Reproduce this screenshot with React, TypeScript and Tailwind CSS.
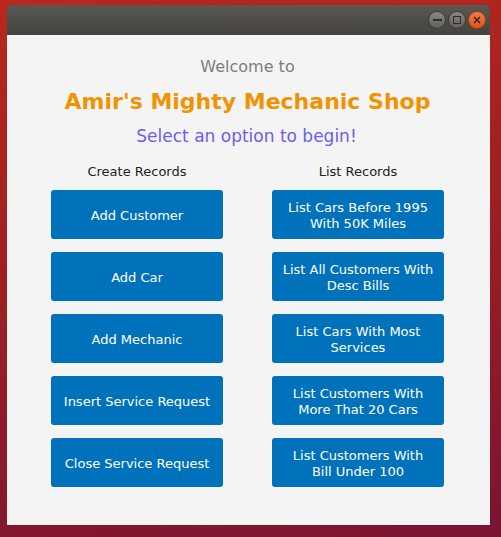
import React from "react";

const left = ["Add Customer", "Add Car", "Add Mechanic", "Insert Service Request", "Close Service Request"];
const right = [
  ["List Cars Before 1995", "With 50K Miles"],
  ["List All Customers With", "Desc Bills"],
  ["List Cars With Most", "Services"],
  ["List Customers With", "More That 20 Cars"],
  ["List Customers With", "Bill Under 100"],
];

function Btn({ lines }: { lines: string[] }) {
  return (
    <div className="h-[49px] w-[172px] rounded-[3px] bg-[#0072bc] flex flex-col items-center justify-center pt-[2px] text-white text-[13px] leading-[16px]">
      {lines.map((l, i) => (
        <span key={i}>{l}</span>
      ))}
    </div>
  );
}

export default function App() {
  return (
    <div
      className="w-[501px] h-[537px] overflow-hidden bg-[linear-gradient(170deg,#b8281c_0%,#9a1f24_50%,#7a1432_100%)] pt-[5px] pl-[7px]"
      style={{ fontFamily: '"DejaVu Sans", sans-serif' }}
    >
      <div className="w-[483px] flex flex-col">
        <div className="h-[30px] rounded-t-[5px] bg-[linear-gradient(#5a5852,#43423d)] flex items-center justify-end pr-[4px] gap-[2px]">
          <div className="w-[18px] h-[18px] rounded-full bg-[linear-gradient(#8a8984,#5f5e5a)] border border-[#3a3935] flex items-center justify-center">
            <div className="w-[9px] h-[1.5px] bg-[#2e2d2a]" />
          </div>
          <div className="w-[18px] h-[18px] rounded-full bg-[linear-gradient(#8a8984,#5f5e5a)] border border-[#3a3935] flex items-center justify-center">
            <div className="w-[8px] h-[8px] border-[1.5px] border-[#2e2d2a]" />
          </div>
          <div className="w-[18px] h-[18px] rounded-full bg-[linear-gradient(#f47a4a,#e4531f)] border border-[#a93a14] flex items-center justify-center">
            <svg width="8" height="8" viewBox="0 0 8 8">
              <path d="M1 1L7 7M7 1L1 7" stroke="#3a1a0e" strokeWidth="1.4" />
            </svg>
          </div>
        </div>
        <div className="h-[490px] bg-[#f4f4f4] flex flex-col items-center">
          <div className="mt-[21px] text-[16px] leading-[22px] text-[#7d7d7d] ml-[-2px]">Welcome to</div>
          <div className="mt-[11px] text-[22px] leading-[26px] font-bold text-[#f39200] ml-[-2px]">Amir's Mighty Mechanic Shop</div>
          <div className="mt-[9px] text-[17px] leading-[24px] text-[#6a5df0] ml-[-4px]">Select an option to begin!</div>
          <div className="mt-[16px] flex gap-[49px] ml-[-2px]">
            <div className="flex flex-col items-center">
              <div className="text-[13px] leading-[16px] text-[#222] mb-[10px]">Create Records</div>
              <div className="flex flex-col gap-[13px]">
                {left.map((t) => (
                  <Btn key={t} lines={[t]} />
                ))}
              </div>
            </div>
            <div className="flex flex-col items-center">
              <div className="text-[13px] leading-[16px] text-[#222] mb-[10px]">List Records</div>
              <div className="flex flex-col gap-[13px]">
                {right.map((t, i) => (
                  <Btn key={i} lines={t} />
                ))}
              </div>
            </div>
          </div>
        </div>
      </div>
    </div>
  );
}
